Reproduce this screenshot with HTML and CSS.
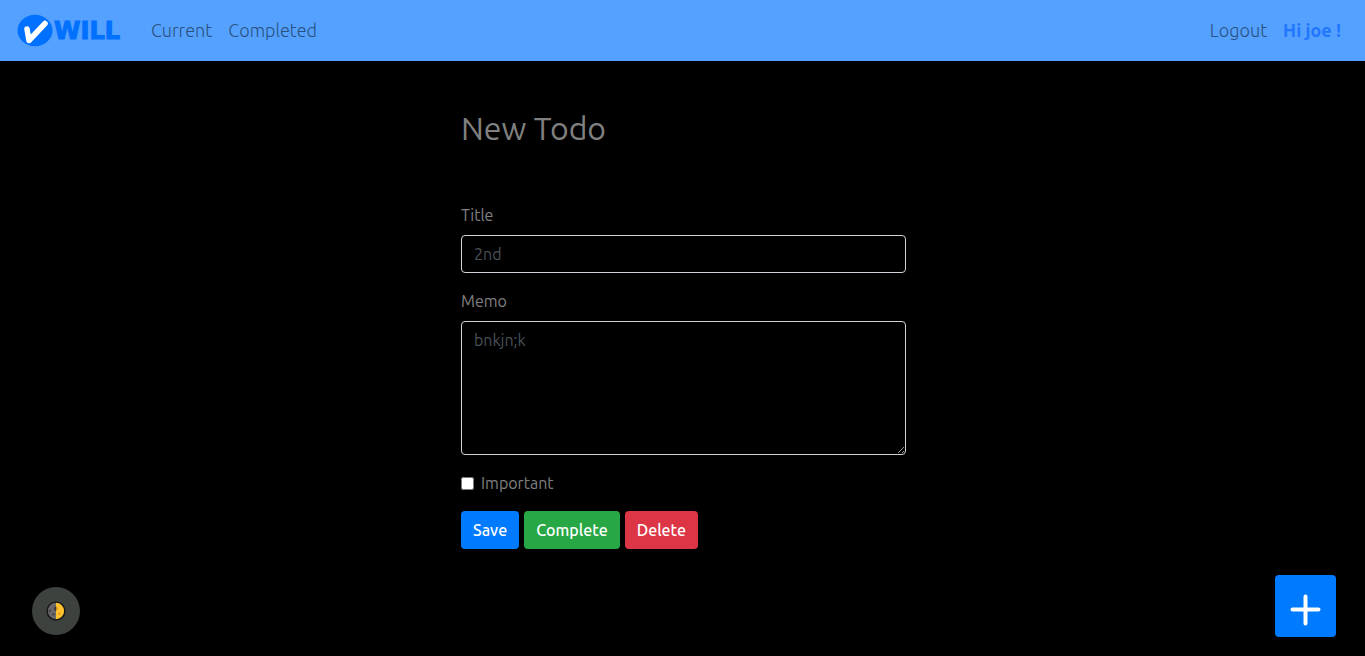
FILE: index.html
```html
<!DOCTYPE html>
<html lang="en">
<head>
<meta charset="utf-8">
<meta name="viewport" content="width=device-width, initial-scale=1">
<title>Will - New Todo</title>
<link rel="stylesheet" href="styles.css">
</head>
<body>
<nav class="navbar">
  <a class="brand" href="#" aria-label="Will">
    <svg class="logo" width="112" height="36" viewBox="0 0 112 36">
      <ellipse cx="19" cy="18.500" rx="17.500" ry="15.700" fill="#0070ff"/>
      <path d="M11 17L13 28.500L29 11.500" fill="none" stroke="#fff" stroke-width="5.500" stroke-linecap="round" stroke-linejoin="round"/>
      <text class="logo-text" x="38" y="27">WILL</text>
    </svg>
  </a>
  <div class="nav-group">
    <a class="nav-link" href="#">Current</a>
    <a class="nav-link" href="#">Completed</a>
  </div>
  <div class="nav-group nav-end">
    <a class="nav-link" href="#">Logout</a>
    <span class="greeting">Hi joe !</span>
  </div>
</nav>
<main class="content">
  <h1 class="heading">New Todo</h1>
  <form class="form">
    <div class="field">
      <label for="title">Title</label>
      <input class="control" id="title" type="text" value="2nd">
    </div>
    <div class="field">
      <label for="memo">Memo</label>
      <textarea class="control" id="memo" rows="5">bnkjn;k</textarea>
    </div>
    <div class="check">
      <input class="check-box" id="important" type="checkbox">
      <label for="important">Important</label>
    </div>
    <div class="actions">
      <button class="btn btn-save" type="button">Save</button>
      <button class="btn btn-complete" type="button">Complete</button>
      <button class="btn btn-delete" type="button">Delete</button>
    </div>
  </form>
</main>
<button class="theme-toggle" type="button" aria-label="Toggle theme">
  <svg width="20" height="20" viewBox="0 0 18 18">
    <circle cx="9" cy="9" r="8" fill="#6b696b"/>
    <path d="M9 1a8 8 0 0 1 0 16z" fill="#ffc22e"/>
    <path d="M9 5a2 2 0 0 0-2 2 2 2 0 0 0 2 2z" fill="#3d3b3f"/>
    <circle cx="3.500" cy="9" r="1.300" fill="#49474a"/>
    <circle cx="6.500" cy="12" r="1.200" fill="#49474a"/>
    <circle cx="12" cy="11.500" r="1.100" fill="#e89a14"/>
    <path d="M9 5a2 2 0 0 1 1 3L9 9z" fill="#c98a1c"/>
    <circle cx="9" cy="9" r="8" fill="none" stroke="#151515" stroke-width="1.300"/>
  </svg>
</button>
<button class="add" type="button" aria-label="Add todo">
  <svg width="31" height="32" viewBox="0 0 31 32">
    <path d="M15.500 2.500v27M2.500 15.500h26" fill="none" stroke="#fff" stroke-width="4" stroke-linecap="round"/>
  </svg>
</button>
</body>
</html>
```
FILE: styles.css
```css
* { box-sizing: border-box; }
body {
  margin: 0;
  background: #000;
  color: #808080;
  font: 16px/24px Ubuntu, "Noto Sans", sans-serif;
}
.navbar {
  display: flex;
  align-items: center;
  padding: 12px 16px;
  background: #54a1ff;
}
.brand { display: block; height: 37px; margin-right: 15px; }
.logo { display: block; }
.logo-text {
  fill: #0070ff;
  stroke: #0070ff;
  stroke-width: 1;
  font: bold 24px "DejaVu Sans", sans-serif;
}
.nav-group { display: flex; margin-bottom: 2px; }
.nav-end { margin-left: auto; }
.nav-link, .greeting { padding: 0 8px; font-size: 18px; }
.nav-link { color: #2a5180; font-weight: 300; text-decoration: none; }
.greeting { color: #2176ff; font-weight: 700; }
.content {
  max-width: 477px;
  margin: 0 auto;
  padding: 48px 15px 0 17px;
}
.heading { margin: 0 0 56px; font-size: 32px; line-height: 38px; font-weight: 400; }
.field { margin-bottom: 16px; }
.field label { display: block; margin-bottom: 8px; }
.control {
  display: block;
  width: 100%;
  padding: 6px 12px;
  border: 1px solid #ced4da;
  border-radius: 4px;
  background: #000;
  color: #495057;
  font: inherit;
}
.check { display: flex; align-items: center; gap: 7px; margin-bottom: 16px; }
.check-box { width: 13px; height: 13px; margin: 0; }
.actions { display: flex; gap: 5px; }
.btn {
  padding: 7px 12px;
  border: 0;
  border-radius: 4px;
  color: #fff;
  font: inherit;
  font-weight: 500;
}
.btn-save { background: #007bff; }
.btn-complete { background: #28a745; }
.btn-delete { background: #dc3545; }
.theme-toggle, .add {
  position: fixed;
  display: flex;
  align-items: center;
  justify-content: center;
  padding: 0;
  border: 0;
}
.theme-toggle {
  left: 32px;
  bottom: 21px;
  width: 48px;
  height: 48px;
  border-radius: 50%;
  background: #3d423e;
}
.add {
  right: 29px;
  bottom: 19px;
  width: 61px;
  height: 62px;
  padding-top: 8px;
  border-radius: 4px;
  background: #007bff;
}
```
